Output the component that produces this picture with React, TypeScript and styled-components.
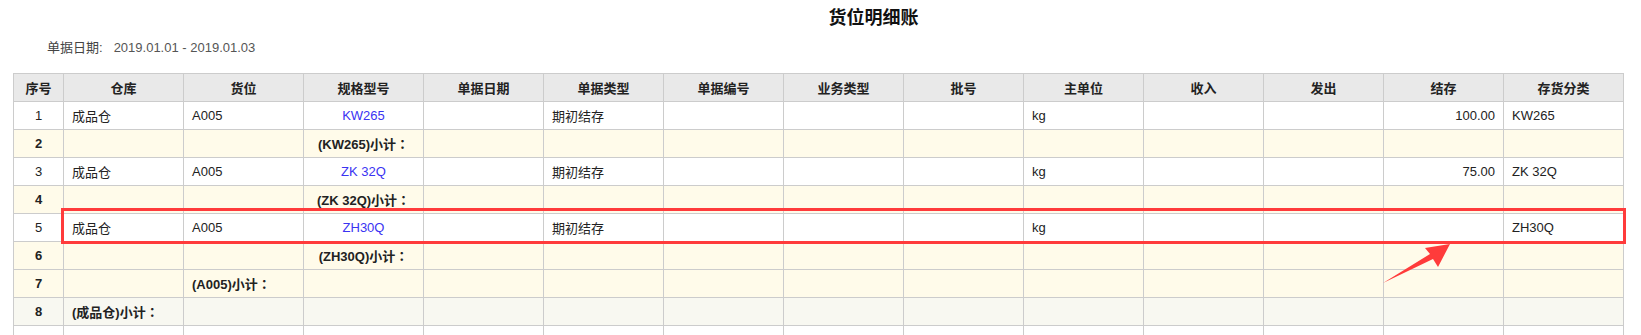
import React from "react";
import styled, { createGlobalStyle } from "styled-components";

const GlobalStyle = createGlobalStyle`
  html, body {
    margin: 0;
    padding: 0;
    background: #fff;
  }
  body {
    font-family: "Liberation Sans", "Noto Sans CJK SC", Arial, sans-serif;
    color: #333;
    overflow: hidden;
  }
`;

type Kind = "data" | "sub" | "total";

type Row = {
  no: number;
  kind: Kind;
  warehouse?: string;
  location?: string;
  spec?: string;
  docType?: string;
  unit?: string;
  balance?: string;
  category?: string;
};

const columns = [
  "序号",
  "仓库",
  "货位",
  "规格型号",
  "单据日期",
  "单据类型",
  "单据编号",
  "业务类型",
  "批号",
  "主单位",
  "收入",
  "发出",
  "结存",
  "存货分类",
];

const rows: Row[] = [
  { no: 1, kind: "data", warehouse: "成品仓", location: "A005", spec: "KW265", docType: "期初结存", unit: "kg", balance: "100.00", category: "KW265" },
  { no: 2, kind: "sub", spec: "(KW265)小计" },
  { no: 3, kind: "data", warehouse: "成品仓", location: "A005", spec: "ZK 32Q", docType: "期初结存", unit: "kg", balance: "75.00", category: "ZK 32Q" },
  { no: 4, kind: "sub", spec: "(ZK 32Q)小计" },
  { no: 5, kind: "data", warehouse: "成品仓", location: "A005", spec: "ZH30Q", docType: "期初结存", unit: "kg", category: "ZH30Q" },
  { no: 6, kind: "sub", spec: "(ZH30Q)小计" },
  { no: 7, kind: "sub", location: "(A005)小计" },
  { no: 8, kind: "total", warehouse: "(成品仓)小计" },
  { no: 9, kind: "data" },
];

const rowBg: Record<Kind, string> = {
  data: "#ffffff",
  sub: "#fffbea",
  total: "#f8f8f1",
};

const Page = styled.div`
  width: 1641px;
`;

const Title = styled.h1`
  margin: 0;
  padding-left: 106px;
  text-align: center;
  font-size: 18px;
  font-weight: bold;
  line-height: 36px;
  color: #111;
`;

const Info = styled.div`
  padding-left: 47px;
  line-height: 24px;
  font-size: 13px;
  color: #555;
`;

const InfoLabel = styled.span`
  margin-right: 11px;
  color: #444;
`;

const TableWrap = styled.div`
  position: relative;
  margin: 13px 0 0 13px;
  width: 1611px;
`;

const Table = styled.table`
  border-collapse: collapse;
  table-layout: fixed;
  width: 1611px;
  font-size: 13px;
`;

const Th = styled.th`
  height: 27px;
  padding: 0 8px;
  background: #e9e9e9;
  border: 1px solid #cccccc;
  font-weight: bold;
  color: #222;
  text-align: center;
  white-space: nowrap;
`;

const Tr = styled.tr<{ $kind: Kind }>`
  background: ${(p) => rowBg[p.$kind]};
  font-weight: ${(p) => (p.$kind === "data" ? "normal" : "bold")};
`;

const Td = styled.td<{ $align?: "left" | "center" | "right"; $link?: boolean }>`
  height: 27px;
  padding: 0 8px;
  border: 1px solid #cccccc;
  text-align: ${(p) => p.$align ?? "left"};
  color: ${(p) => (p.$link ? "#3a33f2" : "#222")};
  white-space: nowrap;
  overflow: visible;
`;

// 全角冒号居中
const Colon = styled.span`
  font-family: "Noto Sans CJK TC", sans-serif;
`;

const Highlight = styled.div`
  position: absolute;
  left: 48px;
  top: 135px;
  width: 1565px;
  height: 36px;
  box-sizing: border-box;
  border: 3px solid #ff3b3b;
  pointer-events: none;
`;

const Arrow = styled.svg`
  position: absolute;
  left: 1360px;
  top: 165px;
  pointer-events: none;
`;

const withColon = (text?: string, sub?: boolean) =>
  text && sub ? (
    <>
      {text}
      <Colon>：</Colon>
    </>
  ) : (
    text
  );

export default function App() {
  return (
    <Page>
      <GlobalStyle />
      <Title>货位明细账</Title>
      <Info>
        <InfoLabel>单据日期:</InfoLabel>2019.01.01 - 2019.01.03
      </Info>
      <TableWrap>
        <Table>
          <colgroup>
            {columns.map((c, i) => (
              <col key={c} style={{ width: i === 0 ? 50 : 120 }} />
            ))}
          </colgroup>
          <thead>
            <tr>
              {columns.map((c) => (
                <Th key={c}>{c}</Th>
              ))}
            </tr>
          </thead>
          <tbody>
            {rows.map((r) => {
              const sub = r.kind !== "data";
              return (
                <Tr key={r.no} $kind={r.kind}>
                  <Td $align="center">{r.no}</Td>
                  <Td>{withColon(r.warehouse, sub)}</Td>
                  <Td>{withColon(r.location, sub)}</Td>
                  <Td $align="center" $link={!sub}>
                    {withColon(r.spec, sub)}
                  </Td>
                  <Td />
                  <Td>{r.docType}</Td>
                  <Td />
                  <Td />
                  <Td />
                  <Td>{r.unit}</Td>
                  <Td />
                  <Td />
                  <Td $align="right">{r.balance}</Td>
                  <Td>{r.category}</Td>
                </Tr>
              );
            })}
          </tbody>
        </Table>
        <Highlight />
        <Arrow width="100" height="60" viewBox="0 0 100 60">
          {/* 页面坐标减去 (1373, 238) */}
          <polygon
            points="10,45 57,16 52,10 77,6 65,29 60,21"
            fill="#ff3b3b"
          />
        </Arrow>
      </TableWrap>
    </Page>
  );
}
